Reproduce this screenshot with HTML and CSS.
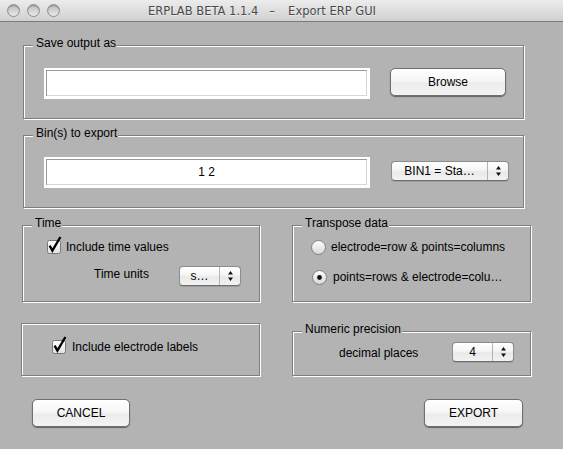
FILE: index.html
```html
<!DOCTYPE html>
<html>
<head>
<meta charset="utf-8">
<title>ERPLAB BETA 1.1.4 - Export ERP GUI</title>
<link rel="stylesheet" href="styles.css">
</head>
<body>
<div class="window">
  <div class="titlebar">
    <div class="lights"><span class="light"></span><span class="light"></span><span class="light"></span></div>
    <div class="title"><span>ERPLAB BETA 1.1.4</span><span class="sep">–</span><span>Export ERP GUI</span></div>
  </div>
  <div class="main">
    <div class="panel p-save">
      <span class="legend">Save output as</span>
      <div class="field"></div>
      <div class="btn browse">Browse</div>
    </div>

    <div class="panel p-bins">
      <span class="legend">Bin(s) to export</span>
      <div class="field">1 2</div>
      <div class="popup pop-bin">
        <span class="pv">BIN1 = Sta…</span>
        <span class="arr"><svg width="5" height="10" viewBox="0 0 5 10"><path d="M2.5 0 L5 3.5 L0 3.5 Z M0 6.5 L5 6.5 L2.5 10 Z" fill="#111"/></svg></span>
      </div>
    </div>

    <div class="row r3">
      <div class="panel p-time">
        <span class="legend">Time</span>
        <div class="check-row">
          <svg class="cb" width="14" height="18" viewBox="0 0 14 18"><defs><linearGradient id="cg1" x1="0" y1="0" x2="0" y2="1"><stop offset="0" stop-color="#ffffff"/><stop offset="1" stop-color="#e2e2e2"/></linearGradient></defs><rect x="0.5" y="4.5" width="13" height="13" rx="2" fill="url(#cg1)" stroke="#777"/><path d="M2.6 9.6 L5.4 14.6 L13.4 1" fill="none" stroke="#000" stroke-width="2.3"/></svg>
          <span>Include time values</span>
        </div>
        <div class="units-row">
          <span class="lbl-units">Time units</span>
          <div class="popup pop-small">
            <span class="pv">s…</span>
            <span class="arr"><svg width="5" height="10" viewBox="0 0 5 10"><path d="M2.5 0 L5 3.5 L0 3.5 Z M0 6.5 L5 6.5 L2.5 10 Z" fill="#111"/></svg></span>
          </div>
        </div>
      </div>

      <div class="panel p-trans">
        <span class="legend">Transpose data</span>
        <div class="radio-row">
          <svg class="rb" width="15" height="15" viewBox="0 0 15 15"><defs><linearGradient id="rg1" x1="0" y1="0" x2="0" y2="1"><stop offset="0" stop-color="#ffffff"/><stop offset="1" stop-color="#d6d6d6"/></linearGradient></defs><circle cx="7.5" cy="7.5" r="7" fill="url(#rg1)" stroke="#7d7d7d"/></svg>
          <span>electrode=row &amp; points=columns</span>
        </div>
        <div class="radio-row second">
          <svg class="rb" width="15" height="15" viewBox="0 0 15 15"><defs><linearGradient id="rg2" x1="0" y1="0" x2="0" y2="1"><stop offset="0" stop-color="#ffffff"/><stop offset="1" stop-color="#d6d6d6"/></linearGradient></defs><circle cx="7.5" cy="7.5" r="7" fill="url(#rg2)" stroke="#7d7d7d"/><circle cx="7.5" cy="7.5" r="2.4" fill="#111"/></svg>
          <span>points=rows &amp; electrode=colu…</span>
        </div>
      </div>
    </div>

    <div class="row r4">
      <div class="panel p-elec">
        <div class="check-row">
          <svg class="cb" width="14" height="18" viewBox="0 0 14 18"><defs><linearGradient id="cg2" x1="0" y1="0" x2="0" y2="1"><stop offset="0" stop-color="#ffffff"/><stop offset="1" stop-color="#e2e2e2"/></linearGradient></defs><rect x="0.5" y="4.5" width="13" height="13" rx="2" fill="url(#cg2)" stroke="#777"/><path d="M2.6 9.6 L5.4 14.6 L13.4 1" fill="none" stroke="#000" stroke-width="2.3"/></svg>
          <span>Include electrode labels</span>
        </div>
      </div>

      <div class="panel p-num">
        <span class="legend">Numeric precision</span>
        <div class="num-row">
          <span class="lbl-dec">decimal places</span>
          <div class="popup pop-small">
            <span class="pv">4</span>
            <span class="arr"><svg width="5" height="10" viewBox="0 0 5 10"><path d="M2.5 0 L5 3.5 L0 3.5 Z M0 6.5 L5 6.5 L2.5 10 Z" fill="#111"/></svg></span>
          </div>
        </div>
      </div>
    </div>

    <div class="row r5">
      <div class="btn cancel">CANCEL</div>
      <div class="btn export">EXPORT</div>
    </div>
  </div>
</div>
</body>
</html>
```

FILE: styles.css
```css
html, body {
  margin: 0;
  padding: 0;
}

body {
  background: #b3b3b3;
  font-family: "Liberation Sans", Arial, sans-serif;
  font-size: 12px;
  color: #000;
}

.window {
  width: 563px;
  height: 449px;
  overflow: hidden;
  background: #b3b3b3;
}

/* ---------- title bar ---------- */
.titlebar {
  height: 21px;
  border-bottom: 1px solid #7b7b7b;
  background: linear-gradient(#ececec, #d0d0d0);
  display: flex;
  align-items: center;
  padding-left: 7px;
}

.lights {
  display: flex;
  gap: 7px;
}

.light {
  box-sizing: border-box;
  width: 13px;
  height: 13px;
  border-radius: 50%;
  border: 1px solid #8f8f8f;
  background: linear-gradient(#bdbdbd, #e9e9e9);
  box-shadow: inset 0 1px 1px rgba(0, 0, 0, 0.25);
}

.title {
  margin-left: 88px;
  font-family: "DejaVu Sans", "Liberation Sans", sans-serif;
  font-size: 11.5px;
  line-height: 21px;
  padding-top: 2px;
  color: #4a4a4a;
  text-shadow: 0 1px 0 rgba(255, 255, 255, 0.5);
  white-space: nowrap;
}

.title .sep {
  margin: 0 13px 0 11px;
}

/* ---------- main area ---------- */
.main {
  padding-top: 23px;
}

.panel {
  position: relative;
  box-sizing: border-box;
  border: 1px solid #7f7f7f;
  box-shadow: inset 1px 1px 0 #ffffff, 1px 1px 0 #ffffff;
}

.legend {
  position: absolute;
  top: -10px;
  left: 9px;
  padding: 0 1px 0 3px;
  line-height: 14px;
  background: #b3b3b3;
  white-space: nowrap;
}

.field {
  box-sizing: border-box;
  width: 326px;
  height: 31px;
  border: 3px solid #ffffff;
  border-top-width: 2px;
  border-left-width: 2px;
  background: #ffffff;
  box-shadow: inset 1px 1px 0 #9a9a9a, inset -1px -1px 0 #d6d6d6;
  text-align: center;
  line-height: 27px;
}

.btn {
  box-sizing: border-box;
  height: 28px;
  border: 1px solid #6e6e6e;
  border-radius: 5px;
  background: linear-gradient(#ffffff 0%, #f6f6f6 45%, #ececec 55%, #f3f3f3 100%);
  box-shadow: 0 1px 1px rgba(0, 0, 0, 0.45);
  text-align: center;
  line-height: 26px;
}

.popup {
  box-sizing: border-box;
  display: flex;
  height: 20px;
  border: 1px solid #8c8c8c;
  border-bottom-color: #6f6f6f;
  border-radius: 4px;
  background: linear-gradient(#ffffff 0%, #f5f5f5 45%, #e9e9e9 55%, #f2f2f2 100%);
  box-shadow: 0 1px 0 rgba(0, 0, 0, 0.12);
}

.popup .pv {
  flex: 1;
  text-align: center;
  line-height: 18px;
  white-space: nowrap;
}

.popup .arr {
  width: 20px;
  border-left: 1px solid #b4b4b4;
  display: flex;
  align-items: center;
  justify-content: center;
}

.popup .arr svg {
  display: block;
}

/* row 1 */
.p-save {
  margin-left: 23px;
  width: 501px;
  height: 74px;
  display: flex;
  align-items: flex-start;
  padding: 22px 0 0 20px;
}

.browse {
  margin-left: 20px;
  width: 116px;
}

/* row 2 */
.p-bins {
  margin-left: 23px;
  margin-top: 16px;
  width: 501px;
  height: 73px;
  display: flex;
  align-items: flex-start;
  padding: 21px 0 0 20px;
}

.pop-bin {
  margin-top: 4px;
  margin-left: 21px;
  width: 118px;
}

/* generic rows */
.row {
  display: flex;
}

.r3 {
  margin-top: 17px;
  padding-left: 22px;
}

.p-time {
  width: 238px;
  height: 77px;
  padding: 10px 0 0 24px;
}

.check-row {
  display: flex;
  align-items: center;
  gap: 5px;
  line-height: 14px;
}

.check-row .cb {
  display: block;
  overflow: visible;
}

.check-row span {
  padding-top: 3px;
}

.units-row {
  display: flex;
  align-items: center;
  margin-top: 12px;
  margin-left: 47px;
}

.lbl-units {
  width: 85px;
  line-height: 14px;
  margin-top: -4px;
}

.pop-small {
  width: 62px;
}

.p-trans {
  margin-left: 32px;
  width: 239px;
  height: 77px;
  padding: 14px 0 0 18px;
}

.radio-row {
  display: flex;
  align-items: center;
  gap: 5px;
  line-height: 15px;
  white-space: nowrap;
}

.radio-row .rb {
  display: block;
}

.radio-row.second {
  margin-top: 15px;
  margin-left: 1px;
  gap: 6px;
}

/* row 4 */
.r4 {
  margin-top: 21px;
  padding-left: 21px;
  align-items: flex-end;
}

.p-elec {
  width: 239px;
  height: 53px;
  padding: 12px 0 0 30px;
}

.p-elec .check-row {
  gap: 6px;
}

.p-num {
  margin-left: 32px;
  width: 239px;
  height: 45px;
  padding: 10px 0 0 46px;
}

.num-row {
  display: flex;
  align-items: center;
}

.lbl-dec {
  width: 113px;
  line-height: 14px;
  padding-top: 1px;
}

/* row 5 */
.r5 {
  margin-top: 23px;
  padding-left: 32px;
}

.cancel {
  width: 98px;
}

.export {
  margin-left: 294px;
  width: 99px;
}
```
